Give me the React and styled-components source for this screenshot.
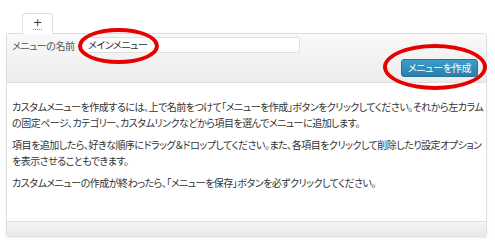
import React from 'react';
import styled, { createGlobalStyle } from 'styled-components';

const Global = createGlobalStyle`
  html, body {
    margin: 0;
    padding: 0;
    background: #fff;
  }
  body {
    font-family: "Noto Sans CJK JP", "Noto Sans", sans-serif;
    font-feature-settings: "palt";
    color: #333;
  }
`;

const Page = styled.div`
  width: 495px;
  height: 241px;
  padding: 13px 8px 0 6px;
  box-sizing: border-box;
  position: relative;
`;

const Tabs = styled.div`
  display: flex;
  padding-left: 16px;
`;

const Tab = styled.div`
  width: 31px;
  height: 21px;
  box-sizing: border-box;
  border: 1px solid #dfdfdf;
  border-bottom: none;
  border-radius: 3px 3px 0 0;
  background: #fff;
  display: flex;
  justify-content: center;
  padding-top: 3px;
  margin-bottom: -1px;
  position: relative;
  z-index: 1;
`;

const Plus = styled.abbr`
  font-family: "DejaVu Sans", sans-serif;
  font-size: 11px;
  line-height: 11px;
  height: 12px;
  color: #333;
  text-decoration: none;
  border-bottom: 1px dotted #888;
`;

const Panel = styled.div`
  border: 1px solid #dfdfdf;
  border-radius: 0 3px 3px 3px;
  box-shadow: 0 1px 2px rgba(0, 0, 0, 0.08);
  overflow: hidden;
`;

const Header = styled.div`
  height: 49px;
  box-sizing: border-box;
  background: linear-gradient(to bottom, #f9f9f9, #ececec);
  border-bottom: 1px solid #dfdfdf;
  padding: 3px 8px 0 5px;
  display: flex;
  flex-direction: column;
`;

const NameRow = styled.div`
  display: flex;
  align-items: center;
  gap: 7px;
`;

const Label = styled.label`
  font-size: 10px;
  color: #555;
  letter-spacing: -0.5px;
  width: 61px;
  white-space: nowrap;
`;

const Input = styled.div`
  width: 220px;
  height: 16px;
  box-sizing: border-box;
  border: 1px solid #dfdfdf;
  border-radius: 3px;
  background: #fff;
  font-size: 10px;
  line-height: 14px;
  letter-spacing: -0.4px;
  padding-left: 7px;
  color: #333;
`;

const ButtonRow = styled.div`
  display: flex;
  justify-content: flex-end;
  margin-top: 6px;
`;

const Button = styled.div`
  width: 77px;
  height: 18px;
  box-sizing: border-box;
  border: 1px solid #21759b;
  border-radius: 3px;
  background: linear-gradient(to bottom, #3e9cc9, #2a7fae);
  color: #fff;
  font-size: 10px;
  line-height: 16px;
  letter-spacing: -0.3px;
  text-align: center;
`;

const Body = styled.div`
  background: #fff;
  height: 138px;
  box-sizing: border-box;
  padding: 16px 6px 0 5px;
`;

const Para = styled.p`
  margin: 0 0 6px;
  font-size: 10px;
  line-height: 16px;
  white-space: nowrap;
  letter-spacing: -0.5px;
`;

const Footer = styled.div`
  height: 14px;
  background: linear-gradient(to bottom, #f4f4f4, #e9e9e9);
  border-top: 1px solid #dfdfdf;
`;

const Ring = styled.div`
  position: absolute;
  box-sizing: border-box;
  border: 4px solid #e60000;
  border-radius: 50%;
  left: ${p => p.x}px;
  top: ${p => p.y}px;
  width: ${p => p.w}px;
  height: ${p => p.h}px;
`;

export default function App() {
  return (
    <>
      <Global />
      <Page>
        <Tabs>
          <Tab>
            <Plus title="新規メニューを追加">+</Plus>
          </Tab>
        </Tabs>
        <Panel>
          <Header>
            <NameRow>
              <Label>メニューの名前</Label>
              <Input>メインメニュー</Input>
            </NameRow>
            <ButtonRow>
              <Button>メニューを作成</Button>
            </ButtonRow>
          </Header>
          <Body>
            <Para>
              カスタムメニューを作成するには、上で名前をつけて「メニューを作成」ボタンをクリックしてください。それから左カラム
              <br />
              の固定ページ、カテゴリー、カスタムリンクなどから項目を選んでメニューに追加します。
            </Para>
            <Para>
              項目を追加したら、好きな順序にドラッグ＆ドロップしてください。また、各項目をクリックして削除したり設定オプション
              <br />
              を表示させることもできます。
            </Para>
            <Para>
              カスタムメニューの作成が終わったら、「メニューを保存」ボタンを必ずクリックしてください。
            </Para>
          </Body>
          <Footer />
        </Panel>
        <Ring x={78} y={28} w={81} h={36} />
        <Ring x={383} y={44} w={104} h={46} />
      </Page>
    </>
  );
}
